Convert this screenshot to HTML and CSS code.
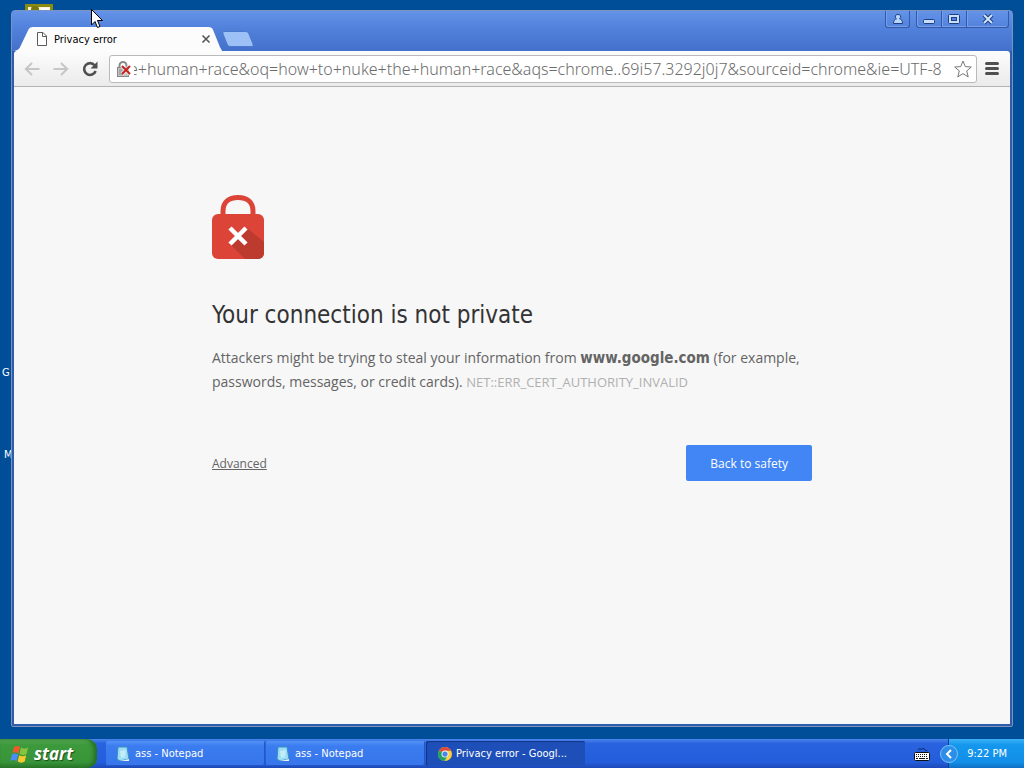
FILE: index.html
```html
<!DOCTYPE html>
<html lang="en">

<head>
    <meta charset="UTF-8" />
    <meta name="viewport" content="width=device-width, initial-scale=1.0" />
    <title>Privacy error</title>
    <link rel="stylesheet" href="styles.css">
</head>

<body>
    <div class="desktop">
        <!-- Desktop icons peeking out from behind the window -->
        <svg class="desk-icon" viewBox="0 0 28 16" width="28" height="16">
            <rect width="28" height="16" fill="#8a8b10" />
            <rect x="3" y="3" width="22" height="13" fill="#f7f5d8" />
            <path d="M6 6V5A4 3 0 0 1 14 5V6Z" fill="#77780f" />
            <path d="M16 4h8v3h-8z" fill="#fff" />
        </svg>
        <span class="desk-label label-g">G</span>
        <span class="desk-label label-m">M</span>

        <div class="window">
            <div class="titlebar">
                <div class="tabs">
                    <div class="tab">
                        <svg class="tab-shape" viewBox="0 0 210 25" preserveAspectRatio="none">
                            <path d="M0 25C4 24 5 23 6 21L14 4C15 1 17 0 19 0H196C199 0 200 1 201 3L208 21C209 23 210 24 210 25Z" fill="#fcfcfd" />
                        </svg>
                        <svg class="page-icon" viewBox="0 0 12 14" width="12" height="14">
                            <path d="M1.500 .5H7L10.500 4V13.500H1.500ZM6.500 .5V4.500H10.500" fill="#fff" stroke="#5c5c5c" />
                        </svg>
                        <span class="tab-title">Privacy error</span>
                        <button class="tab-close" aria-label="Close tab">
                            <svg viewBox="0 0 10 10" width="10" height="10">
                                <path d="M1.500 1.500L8.500 8.500M8.500 1.500L1.500 8.500" stroke="#555" stroke-width="1.600" />
                            </svg>
                        </button>
                    </div>
                    <button class="new-tab" aria-label="New tab">
                        <svg viewBox="0 0 32 16" width="32" height="16">
                            <path d="M3 .5H23C25 .5 26 1 27 3L31 13C31.500 15 31 15.500 29 15.500H9C7 15.500 6 15 5 13L1 3C.5 1 1 .5 3 .5Z" fill="#9dc1f6" stroke="#4a78cc" />
                        </svg>
                    </button>
                </div>
                <div class="win-controls">
                    <button class="ctl user" aria-label="User">
                        <svg viewBox="0 0 12 12" width="12" height="12">
                            <path d="M6 1.500A2.300 2.300 0 0 1 7.500 5.800C9.500 6.300 10.500 7.500 10.500 10.500H1.500C1.500 7.500 2.500 6.300 4.500 5.800A2.300 2.300 0 0 1 6 1.500Z" fill="#b9d5fa" stroke="#1d3f83" />
                        </svg>
                    </button>
                    <button class="ctl first" aria-label="Minimize">
                        <svg viewBox="0 0 12 12" width="12" height="12">
                            <rect x=".5" y="6.500" width="11" height="4" rx="1" fill="#c8defb" stroke="#1d3f83" />
                        </svg>
                    </button>
                    <button class="ctl" aria-label="Maximize">
                        <svg viewBox="0 0 12 12" width="12" height="12">
                            <rect x=".5" y="1.500" width="11" height="9" rx="1" fill="#c8defb" stroke="#1d3f83" />
                            <rect x="3.500" y="4.500" width="5" height="3" fill="#5282dc" stroke="#1d3f83" />
                        </svg>
                    </button>
                    <button class="ctl last" aria-label="Close">
                        <svg viewBox="0 0 12 12" width="12" height="12">
                            <path d="M2 2L10 10M10 2L2 10" stroke="#1d3f83" stroke-width="4" />
                            <path d="M2 2L10 10M10 2L2 10" stroke="#d3e5fc" stroke-width="2" />
                        </svg>
                    </button>
                </div>
            </div>

            <div class="toolbar">
                <button class="nav" aria-label="Back">
                    <svg viewBox="0 0 16 14" width="16" height="14">
                        <path d="M1.500 7H15.500M8 1L1.800 7L8 13" fill="none" stroke="#c6c6c6" stroke-width="2" />
                    </svg>
                </button>
                <button class="nav" aria-label="Forward">
                    <svg viewBox="0 0 16 14" width="16" height="14">
                        <path d="M.5 7H14.500M8 1L14.200 7L8 13" fill="none" stroke="#c6c6c6" stroke-width="2" />
                    </svg>
                </button>
                <button class="nav" aria-label="Reload">
                    <svg viewBox="0 0 16 16" width="16" height="16">
                        <path d="M12.600 4.300A5.900 5.900 0 1 0 13.600 10" fill="none" stroke="#505050" stroke-width="2.600" />
                        <path d="M15.500 .5V7.500H8.500Z" fill="#505050" />
                    </svg>
                </button>
                <div class="omnibox">
                    <svg class="bad-lock" viewBox="0 0 16 16" width="16" height="16">
                        <path d="M3.500 7V4.500A3.500 3.500 0 0 1 10.500 4.500V7" fill="none" stroke="#888" stroke-width="2" />
                        <rect x="1.500" y="6.500" width="11" height="9" fill="#c4c4c4" stroke="#888" />
                        <path d="M3 9H7M3 11H7M3 13H8" stroke="#8a8a8a" />
                        <path d="M6 5L14 13M14 5L6 13" stroke="#fff" stroke-width="4" stroke-opacity=".6" />
                        <path d="M6 5L14 13M14 5L6 13" stroke="#c5221f" stroke-width="2" />
                    </svg>
                    <input class="url" type="text" aria-label="Address" value="e+human+race&amp;oq=how+to+nuke+the+human+race&amp;aqs=chrome..69i57.3292j0j7&amp;sourceid=chrome&amp;ie=UTF-8">
                    <button class="star" aria-label="Bookmark">
                        <svg viewBox="0 0 18 18" width="18" height="18">
                            <path d="M9 1L11.300 6.600L17.300 7L12.700 10.900L14.200 16.900L9 13.600L3.800 16.900L5.300 10.900L.7 7L6.700 6.600Z" fill="#fff" stroke="#777" stroke-linejoin="round" />
                        </svg>
                    </button>
                </div>
                <button class="menu" aria-label="Menu">
                    <svg viewBox="0 0 14 13" width="14" height="13">
                        <path d="M1.500 1.500H12.500M1.500 6.500H12.500M1.500 11.500H12.500" stroke="#505050" stroke-width="3" stroke-linecap="round" />
                    </svg>
                </button>
            </div>

            <main class="page">
                <div class="interstitial">
                    <svg class="lock" viewBox="0 0 52 64" width="52" height="64">
                        <path d="M11 22V16C11 7 17 2.500 26 2.500S41 7 41 16V22" fill="none" stroke="#db4437" stroke-width="5" />
                        <rect y="19" width="52" height="45" rx="6" fill="#db4437" />
                        <path d="M35 33L52 47V58A6 6 0 0 1 46 64H33L18 49L26 41Z" fill="#bd3a2f" />
                        <path d="M18 33L34 49M34 33L18 49" stroke="#fff" stroke-width="4.500" />
                    </svg>
                    <h1>Your connection is not private</h1>
                    <p>Attackers might be trying to steal your information from <strong>www.google.com</strong> (for example, passwords, messages, or credit cards). <span class="error-code">NET::ERR_CERT_AUTHORITY_INVALID</span></p>
                    <div class="actions">
                        <a href="#" class="advanced">Advanced</a>
                        <button class="safety">Back to safety</button>
                    </div>
                </div>
            </main>
        </div>

        <svg class="cursor" viewBox="0 0 12 20" width="12" height="20">
            <path d="M.5 .5V16L4 12.500L6.500 18.500L9 17.500L6.500 11.500H11.500Z" fill="#fff" stroke="#000" />
        </svg>
    </div>

    <footer class="taskbar">
        <button class="start">
            <svg viewBox="0 0 20 18" width="20" height="18">
                <path d="M4 2C6 .5 8 .5 10 2L8.500 8.500C6.500 7 4.500 7 2.300 8.300Z" fill="#ee5a28" />
                <path d="M11 2.500C13 4 15.500 4 18 2.500L16.500 9C14.500 10.500 12 10.500 9.500 9Z" fill="#86c440" />
                <path d="M2 9.500C4 8 6 8 8.200 9.500L6.700 16C4.500 14.500 2.500 14.500 .3 16Z" fill="#4b8df5" />
                <path d="M9.200 10.200C11.500 11.700 13.800 11.700 16.200 10.200L14.700 16.500C12.500 18 10 18 7.700 16.500Z" fill="#fbc82c" />
            </svg>
            start
        </button>
        <div class="tasks">
            <button class="task">
                <svg viewBox="0 0 14 16" width="14" height="16">
                    <path d="M2 1H11L13 13L4 15L1 13Z" fill="#9bdcf5" stroke="#3c8fc4" />
                    <path d="M4 5L10 4L9 11L5 12Z" fill="#c2ecfa" />
                    <path d="M4 15L13 13V15Z" fill="#e9eef0" />
                </svg>
                ass - Notepad
            </button>
            <button class="task">
                <svg viewBox="0 0 14 16" width="14" height="16">
                    <path d="M2 1H11L13 13L4 15L1 13Z" fill="#9bdcf5" stroke="#3c8fc4" />
                    <path d="M4 5L10 4L9 11L5 12Z" fill="#c2ecfa" />
                    <path d="M4 15L13 13V15Z" fill="#e9eef0" />
                </svg>
                ass - Notepad
            </button>
            <button class="task active">
                <svg viewBox="0 0 16 16" width="14" height="14">
                    <circle cx="8" cy="8" r="8" fill="#ffcd40" />
                    <path d="M8 8L1.100 4A8 8 0 0 1 15 4.200H8Z" fill="#dd4b3e" />
                    <path d="M8 8L1.100 4A8 8 0 0 0 7.500 16L11 10Z" fill="#1da362" />
                    <circle cx="8" cy="8" r="4" fill="#f4f4f4" />
                    <circle cx="8" cy="8" r="3" fill="#4a86e8" />
                </svg>
                Privacy error - Googl...
            </button>
        </div>
        <svg class="keyboard" viewBox="0 0 16 14" width="16" height="14">
            <path d="M4 3C5 .5 7 3 8 2S10 1 11 3S13 2 13 4" fill="none" stroke="#10245c" />
            <rect x=".5" y="5.500" width="15" height="8" rx="1" fill="#fff" stroke="#111" />
            <path d="M2 7.500H14M2 9.500H14" stroke="#111" stroke-dasharray="1 1" />
            <path d="M2 11.500H4M5 11.500H11M12 11.500H14" stroke="#111" />
        </svg>
        <div class="tray">
            <button class="tray-toggle" aria-label="Show hidden icons">
                <svg viewBox="0 0 18 18" width="18" height="18">
                    <circle cx="9" cy="9" r="8.500" fill="#2c8ee8" stroke="#7cc3f7" />
                    <path d="M11 5L7 9L11 13" fill="none" stroke="#fff" stroke-width="2" />
                </svg>
            </button>
            <span class="clock">9:22 PM</span>
        </div>
    </footer>
</body>

</html>
```
FILE: styles.css
```css
* {
    box-sizing: border-box;
}

body {
    margin: 0;
    height: 100vh;
    display: flex;
    flex-direction: column;
    overflow: hidden;
    font-family: "DejaVu Sans Condensed", "Noto Sans", sans-serif;
    font-size: 11px;
    background: #004e98;
}

button {
    margin: 0;
    padding: 0;
    border: none;
    background: none;
    font-family: inherit;
    font-size: inherit;
    color: inherit;
    display: flex;
    align-items: center;
    justify-content: center;
}

svg {
    display: block;
    flex: none;
}

/* Desktop */
.desktop {
    flex: 1;
    min-height: 0;
    position: relative;
    display: flex;
    padding: 10px 11px 12px;
}

.desk-icon {
    position: absolute;
    top: 4px;
    left: 25px;
}

.desk-label {
    position: absolute;
    left: 2px;
    color: #fff;
    line-height: 14px;
}

.label-g {
    top: 366px;
}

.label-m {
    top: 448px;
    left: 4px;
}

.cursor {
    position: absolute;
    top: 9px;
    left: 91px;
}

/* Browser window */
.window {
    flex: 1;
    position: relative;
    display: flex;
    flex-direction: column;
    border: 1px solid #7d93bd;
    border-radius: 4px 4px 2px 2px;
    padding: 0 2px 2px;
    background: #2f5cab;
}

.titlebar {
    display: flex;
    justify-content: space-between;
    align-items: flex-start;
    height: 40px;
    margin: 0 -2px;
    padding: 0 2px;
    background: linear-gradient(#6493e8, #5282dc 40%, #4370cb);
}

.tabs {
    display: flex;
    align-items: flex-end;
    height: 40px;
}

.tab {
    position: relative;
    display: flex;
    align-items: center;
    width: 208px;
    height: 24px;
    padding: 0 11px 0 22px;
}

.tab-shape {
    position: absolute;
    top: 0;
    left: 0;
    width: 100%;
    height: 100%;
}

.page-icon,
.tab-title,
.tab-close {
    position: relative;
}

.tab-title {
    flex: 1;
    margin-left: 6px;
    color: #000;
}

.new-tab {
    height: 24px;
}

.win-controls {
    display: flex;
    padding-right: 1px;
}

.ctl {
    width: 25px;
    height: 17px;
    border: 1px solid #3159a8;
    border-top: none;
    border-left: none;
    box-shadow: inset 1px -1px #789fe8;
}

.ctl.user {
    border-left: 1px solid #3159a8;
    border-radius: 0 0 3px 3px;
    margin-right: 6px;
}

.ctl.first {
    width: 26px;
    border-left: 1px solid #3159a8;
    border-bottom-left-radius: 3px;
}

.ctl.last {
    width: 42px;
    border-bottom-right-radius: 3px;
}

.toolbar {
    display: flex;
    align-items: center;
    height: 36px;
    padding: 0 11px 0 10px;
    background: linear-gradient(#fcfcfd, #ebebeb);
    border-bottom: 1px solid #b3b3b3;
    border-radius: 3px 3px 0 0;
}

.nav {
    width: 16px;
    margin-right: 13px;
}

.omnibox {
    flex: 1;
    display: flex;
    align-items: center;
    height: 28px;
    padding: 0 4px 0 6px;
    margin: 0 8px 0 -2px;
    background: #fff;
    border: 1px solid #bababa;
    border-radius: 3px;
}

.url {
    flex: 1;
    min-width: 0;
    height: 24px;
    margin: 0 2px;
    padding: 0;
    border: none;
    outline: none;
    background: none;
    color: #6c6c6c;
    font-family: "Noto Sans", sans-serif;
    font-size: 16px;
    font-weight: 300;
    text-indent: -5px;
}

.page {
    flex: 1;
    padding: 108px 24px 0;
    background: #f7f7f7;
}

.interstitial {
    max-width: 600px;
    margin: 0 auto;
    color: #646464;
}

h1 {
    margin: 42px 0 17px;
    color: #333;
    font-size: 24px;
    font-weight: normal;
    line-height: 28px;
}

p {
    margin: 0;
    font-family: "Open Sans", "Noto Sans", sans-serif;
    font-size: 14px;
    line-height: 24px;
}

strong {
    font-family: "DejaVu Sans Condensed", "Noto Sans", sans-serif;
    font-size: 15px;
    line-height: 1;
}

.error-code {
    color: #b0b0b0;
    font-size: 13px;
    line-height: 1;
}

.actions {
    display: flex;
    justify-content: space-between;
    align-items: center;
    margin-top: 51px;
    font-family: "Open Sans", "Noto Sans", sans-serif;
    font-size: 12px;
}

.advanced {
    color: #646464;
}

.safety {
    height: 36px;
    padding: 0 24px;
    border-radius: 2px;
    background: #4285f4;
    color: #fff;
}

/* Taskbar */
.taskbar {
    display: flex;
    align-items: stretch;
    height: 29px;
    color: #fff;
    background: linear-gradient(#4a86ec, #2a63df 15%, #245ddb 80%, #1b48b8);
}

.start {
    width: 97px;
    gap: 4px;
    padding-right: 14px;
    border-radius: 0 10px 10px 0;
    background: linear-gradient(#5dac5b, #3c9a3c 20%, #389438 80%, #2a7a2a);
    box-shadow: inset -3px 0 4px #246c24;
    font-family: "Open Sans", "Noto Sans", sans-serif;
    font-size: 17px;
    font-style: italic;
    font-weight: bold;
    text-shadow: 1px 1px 1px #1d4f1d;
}

.tasks {
    flex: 1;
    display: flex;
    gap: 1px;
    padding: 2px 0 2px 9px;
}

.task {
    width: 159px;
    justify-content: flex-start;
    gap: 5px;
    padding-left: 10px;
    border-radius: 2px;
    background: linear-gradient(#5292f6, #3b7cf0 20%, #3675ea);
    box-shadow: inset -1px -1px #2456c4;
}

.task.active {
    padding-left: 12px;
    gap: 4px;
    background: #1e4eb8;
    box-shadow: inset 1px 1px 1px #123585;
}

.keyboard {
    align-self: center;
    margin-right: 18px;
}

.tray {
    display: flex;
    align-items: center;
    padding-right: 17px;
    background: linear-gradient(#3cb1f5, #1597ee 20%, #128fe8 80%, #0f6fc4);
    border-left: 1px solid #0f3c96;
}

.tray-toggle {
    margin-left: -9px;
}

.clock {
    margin-left: 9px;
}
```
